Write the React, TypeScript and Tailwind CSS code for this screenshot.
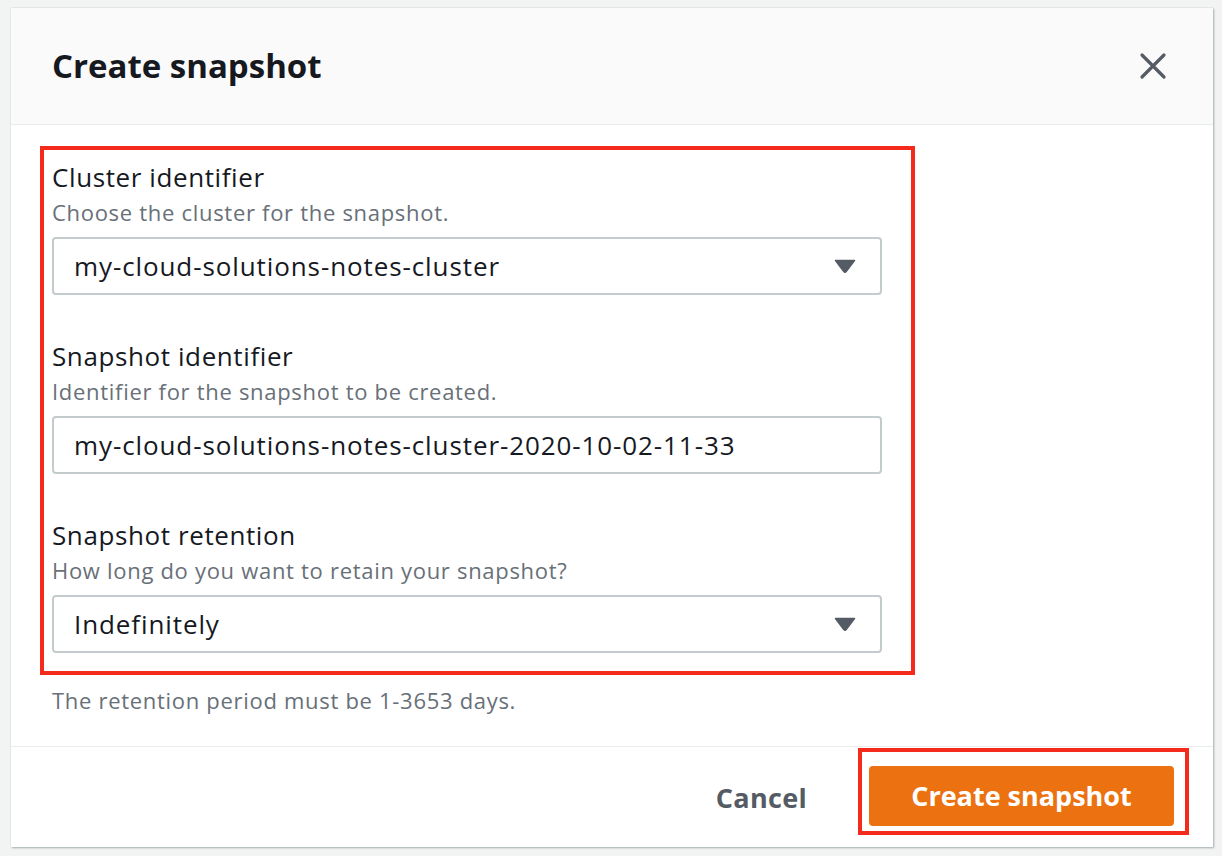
import React from 'react';

const font = { fontFamily: '"Open Sans", "Noto Sans", Arial, sans-serif' };

const Caret = () => (
  <svg width="22" height="14" viewBox="0 0 22 14" className="shrink-0">
    <path d="M1.5 1.5 L20.5 1.5 L12.2 12.6 Q11 14 9.8 12.6 Z" fill="#545b64" stroke="#545b64" strokeWidth="1.5" strokeLinejoin="round" />
  </svg>
);

type FieldProps = {
  label: string;
  hint: string;
  value: string;
  select?: boolean;
  first?: boolean;
};

const Field = ({ label, hint, value, select, first }: FieldProps) => (
  <div className={first ? 'pt-[10px]' : 'pt-[44px]'}>
    <div className="text-[26px] leading-[34px] tracking-[0.6px] text-[#16191f]">{label}</div>
    <div className="mt-[4px] text-[22px] leading-[28px] tracking-[0.7px] text-[#687078]">{hint}</div>
    <div className="mt-[11px] flex h-[58px] w-[830px] items-center justify-between rounded-[4px] border-2 border-[#c3cbcc] bg-white pl-[20px] pr-[24px]">
      <span className="text-[26px] tracking-[0.9px] text-[#16191f]">{value}</span>
      {select && <Caret />}
    </div>
  </div>
);

export default function App() {
  return (
    <div className="min-h-[856px] w-[1222px] bg-[#f2f3f3] pt-[8px] pl-[11px]" style={font}>
      <div className="flex h-[839px] w-[1202px] flex-col bg-white shadow-[1px_1px_2px_rgba(0,28,36,0.3),0_0_1px_rgba(0,28,36,0.2)]">
        <div className="flex h-[117px] shrink-0 items-center justify-between border-b border-[#eaeded] bg-[#fafafa] pl-[41px] pr-[46px]">
          <h1 className="text-[33px] font-bold text-[#16191f]">Create snapshot</h1>
          <svg width="28" height="28" viewBox="0 0 28 28">
            <path d="M3 3 L25 25 M25 3 L3 25" stroke="#545b64" strokeWidth="3.2" strokeLinecap="round" />
          </svg>
        </div>

        <div className="flex-1 px-[41px] pt-[21px]">
          <div className="-ml-[12px] w-[875px] border-4 border-[#f42a1d] pl-[8px] pb-[18px]">
            <Field first select label="Cluster identifier" hint="Choose the cluster for the snapshot." value="my-cloud-solutions-notes-cluster" />
            <Field label="Snapshot identifier" hint="Identifier for the snapshot to be created." value="my-cloud-solutions-notes-cluster-2020-10-02-11-33" />
            <Field select label="Snapshot retention" hint="How long do you want to retain your snapshot?" value="Indefinitely" />
          </div>
          <div className="mt-[11px] text-[22px] leading-[28px] tracking-[0.7px] text-[#687078]">The retention period must be 1-3653 days.</div>
        </div>

        <div className="flex h-[101px] shrink-0 items-start justify-end border-t border-[#eaeded] pr-[24px] pt-[1px]">
          <button className="mt-[35px] mr-[51px] text-[27px] font-bold leading-[30px] tracking-[0.3px] text-[#545b64]">Cancel</button>
          <div className="border-4 border-[#f42a1d] pt-[14px] pb-[5px] pl-[7px] pr-[11px]">
            <button className="h-[60px] w-[305px] rounded-[4px] bg-[#ec7211] text-[27px] font-bold text-white">
              Create snapshot
            </button>
          </div>
        </div>
      </div>
    </div>
  );
}
